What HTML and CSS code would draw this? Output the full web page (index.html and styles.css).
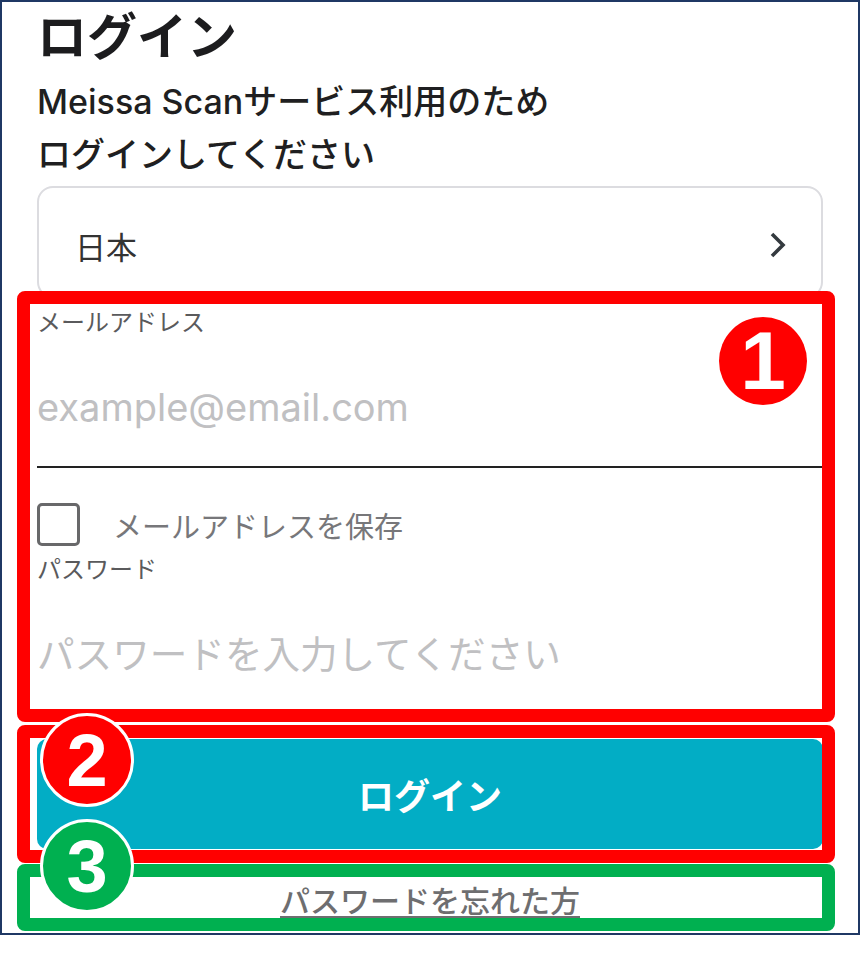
FILE: index.html
```html
<!DOCTYPE html>
<html lang="ja">
<head>
  <meta charset="UTF-8" />
  <meta name="viewport" content="width=device-width, initial-scale=1.0"/>
  <title>ログイン — Meissa Scan</title>
  <link rel="stylesheet" href="styles.css">
</head>
<body>
  <div class="frame">
    <h1 class="title">ログイン</h1>
    <p class="lead">Meissa Scanサービス利用のため<br>ログインしてください</p>

    <div class="country">
      <span>日本</span>
      <svg class="chevron" width="18" height="28" viewBox="0 0 18 28">
        <polyline points="3,3 14,14 3,25" fill="none" stroke="#343a3f" stroke-width="3.6"/>
      </svg>
    </div>

    <div class="field">
      <div class="field-label">メールアドレス</div>
      <div class="field-input email">example@email.com</div>
    </div>

    <div class="remember">
      <span class="checkbox"></span>
      <span>メールアドレスを保存</span>
    </div>

    <div class="field">
      <div class="field-label">パスワード</div>
      <div class="field-input password">パスワードを入力してください</div>
    </div>

    <button class="login-btn">ログイン</button>

    <a class="forgot" href="#">パスワードを忘れた方</a>

    <!-- annotation overlay -->
    <div class="mark mark-red mark-1"></div>
    <div class="mark mark-red mark-2"></div>
    <div class="mark mark-green mark-3"></div>

    <div class="badge badge-red badge-1">1</div>
    <div class="badge badge-red badge-2">2</div>
    <div class="badge badge-green badge-3">3</div>
  </div>
</body>
</html>
```

FILE: styles.css
```css
* { margin: 0; padding: 0; box-sizing: border-box; }

body {
  background: #fff;
  font-family: Inter, "Noto Sans CJK JP", sans-serif;
}

.frame {
  position: relative;
  width: 860px;
  height: 935px;
  border: 2px solid #1f3864;
  padding: 5px 35px 0 35px;
  overflow: hidden;
}

.title {
  font-size: 50px;
  font-weight: bold;
  line-height: 60px;
  color: #1c1c1e;
}

.lead {
  margin-top: 8px;
  font-size: 34px;
  line-height: 53px;
  color: #1f1f21;
  font-weight: 500;
}

.country {
  margin-top: 5px;
  height: 112px;
  border: 2px solid #dcdce0;
  border-radius: 16px;
  display: flex;
  align-items: center;
  justify-content: space-between;
  padding: 6px 34px 0 36px;
  font-size: 31px;
  color: #333;
}

.field-label {
  margin-top: 10px;
  font-size: 24px;
  line-height: 30px;
  color: #5a5a5c;
}

.field-input {
  line-height: 44px;
  color: #c0c0c2;
  white-space: nowrap;
}

.field-input.email {
  font-size: 38px;
  padding: 47px 0 37px;
  border-bottom: 2px solid #222;
}

.field-input.password {
  font-size: 37.6px;
  padding: 48px 0 33px;
  border-bottom: 2px solid #222;
}

.remember {
  margin-top: 35px;
  display: flex;
  align-items: center;
  gap: 33px;
  font-size: 29px;
  color: #77777a;
  height: 43px;
}

.checkbox {
  width: 43px;
  height: 43px;
  border: 3px solid #68686a;
  border-radius: 5px;
}

.remember + .field .field-label { margin-top: 9px; }

.login-btn {
  display: block;
  width: 100%;
  height: 110px;
  margin-top: 27px;
  border: none;
  border-radius: 10px;
  background: #02adc5;
  color: #fff;
  font-family: Inter, "Noto Sans CJK JP", sans-serif;
  font-size: 36px;
  font-weight: bold;
}

.forgot {
  display: block;
  margin-top: 32px;
  text-align: center;
  font-size: 30px;
  line-height: 40px;
  color: #6e6e70;
  font-weight: 500;
  text-decoration: underline;
  text-underline-offset: 4px;
  text-decoration-thickness: 2px;
}

/* annotation boxes */
.mark {
  position: absolute;
  left: 15px;
  width: 818px;
  border: 13px solid;
  border-radius: 8px;
}

.mark-red { border-color: #ff0000; }
.mark-green { border-color: #00b050; }

.mark-1 { top: 289px; height: 431px; }
.mark-2 { top: 723px; height: 138px; }
.mark-3 { top: 862px; height: 67px; }

.badge {
  position: absolute;
  display: flex;
  align-items: center;
  justify-content: center;
  border-radius: 50%;
  color: #fff;
  font-family: "Liberation Sans", Arial, sans-serif;
  font-weight: bold;
}

.badge-red { background: #ff0000; }
.badge-green { background: #00b050; }

.badge-1 {
  left: 717px;
  top: 315px;
  width: 88px;
  height: 88px;
  font-size: 82px;
}

.badge-2,
.badge-3 {
  left: 38px;
  width: 94px;
  height: 94px;
  border: 3px solid #fff;
  font-size: 74px;
}

.badge-2 { top: 711px; }
.badge-3 { top: 817px; }
```
